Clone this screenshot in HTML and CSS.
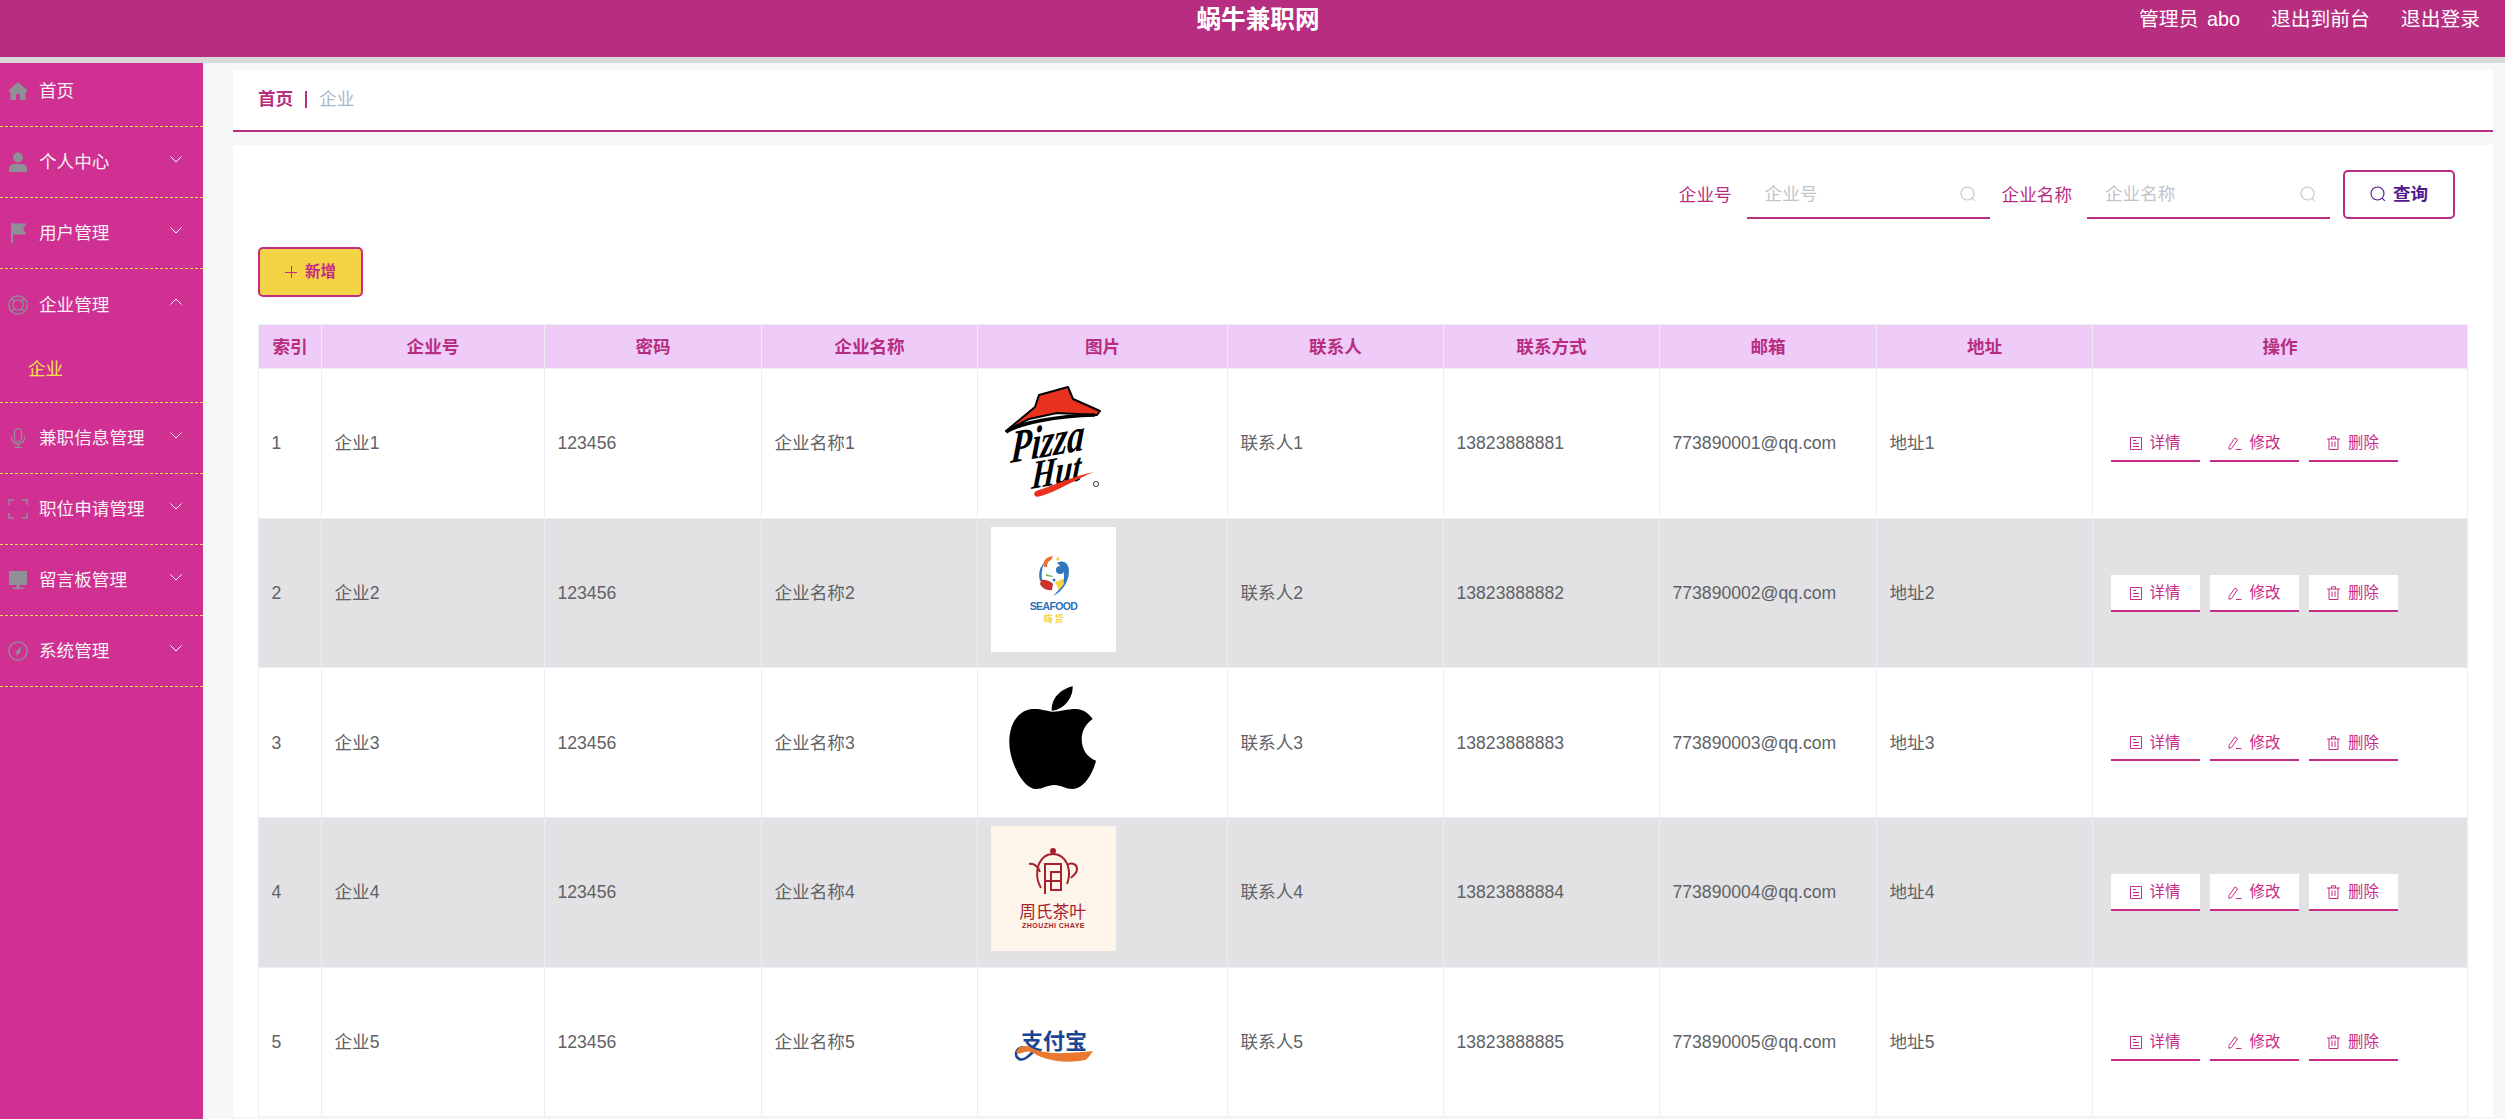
FILE: index.html
```html
<!DOCTYPE html>
<html lang="zh">
<head>
  <meta charset="UTF-8" />
  <title>蜗牛兼职网</title>
  <link rel="stylesheet" href="styles.css">
</head>
<body>
  <svg class="defs" aria-hidden="true">
    <symbol id="i-down" viewBox="0 0 12 7"><path d="M.5.5 6 6 11.5.5" fill="none" stroke="currentColor"/></symbol>
    <symbol id="i-up" viewBox="0 0 12 7"><path d="M.5 6.500 6 1l5.500 5.500" fill="none" stroke="currentColor"/></symbol>
    <symbol id="i-search" viewBox="0 0 16 16"><circle cx="7.500" cy="7.500" r="6.500" fill="none" stroke="currentColor" stroke-width="1.100"/><path d="m12.200 12.200 2.600 2.600" stroke="currentColor" stroke-width="1.100"/></symbol>
    <symbol id="i-detail" viewBox="0 0 12 13"><path d="M.5.5h11v12H.5z" fill="none" stroke="currentColor"/><path d="M3 3.500h3M3 6.500h6M3 9.500h6" stroke="currentColor"/></symbol>
    <symbol id="i-edit" viewBox="0 0 14 13"><path d="M1 9.500 7 1l2.500 1.800-6 8.700-2.500.8z" fill="none" stroke="currentColor"/><path d="M8 12.500h5.500" stroke="currentColor"/></symbol>
    <symbol id="i-del" viewBox="0 0 13 14"><path d="M0 3h13M4.500 3V.8h4V3M2 3v10.500h9V3M5 5.500v5.500M8 5.500v5.500" fill="none" stroke="currentColor"/></symbol>
  </svg>

  <header class="topbar">
    <div class="site-title">蜗牛兼职网</div>
    <nav class="top-links">
      <a>管理员 abo</a>
      <a>退出到前台</a>
      <a>退出登录</a>
    </nav>
  </header>

  <div class="layout">
    <aside class="sidebar">
      <div class="menu-item first">
        <svg class="menu-icon" viewBox="0 0 20 20"><path d="M10 1 1 9v2h1.500v8H8v-6h4v6h5.500v-8H19V9z" fill="currentColor"/></svg>
        <span>首页</span>
      </div>
      <div class="menu-item">
        <svg class="menu-icon" viewBox="0 0 20 20"><circle cx="10" cy="5.500" r="5" fill="currentColor"/><path d="M1 20v-3.500C1 13.500 3.500 12 6 12h8c2.500 0 5 1.500 5 4.500V20z" fill="currentColor"/></svg>
        <span>个人中心</span>
        <svg class="chevron"><use href="#i-down"/></svg>
      </div>
      <div class="menu-item">
        <svg class="menu-icon" viewBox="0 0 20 20"><path d="M3 0h2v20H3zM5 .5h13.500L15 6l3.500 5.500H5z" fill="currentColor"/></svg>
        <span>用户管理</span>
        <svg class="chevron"><use href="#i-down"/></svg>
      </div>
      <div class="menu-item open">
        <svg class="menu-icon" viewBox="0 0 20 20"><g fill="none" stroke="currentColor" stroke-width="1.300"><circle cx="10" cy="10" r="9.200"/><circle cx="10" cy="10" r="5.200"/><path d="m3.500 3.500 3 3M16.500 3.500l-3 3M3.500 16.500l3-3M16.500 16.500l-3-3"/></g></svg>
        <span>企业管理</span>
        <svg class="chevron"><use href="#i-up"/></svg>
      </div>
      <div class="submenu">企业</div>
      <div class="menu-item">
        <svg class="menu-icon" viewBox="0 0 20 20"><g fill="none" stroke="currentColor" stroke-width="1.300"><rect x="6.500" y=".7" width="7" height="13" rx="3.500"/><path d="M3.500 8.500v1.500c0 3.500 3 6 6.500 6s6.500-2.500 6.500-6V8.500M10 16v3.500M6.500 19.500h7"/></g></svg>
        <span>兼职信息管理</span>
        <svg class="chevron"><use href="#i-down"/></svg>
      </div>
      <div class="menu-item">
        <svg class="menu-icon" viewBox="0 0 20 20"><path d="M6 1H1v5M14 1h5v5M6 19H1v-5M14 19h5v-5" fill="none" stroke="currentColor" stroke-width="1.500"/></svg>
        <span>职位申请管理</span>
        <svg class="chevron"><use href="#i-down"/></svg>
      </div>
      <div class="menu-item">
        <svg class="menu-icon" viewBox="0 0 20 20"><path d="M1 1h18v14H1zM8.500 15h3v2.500h4V19h-11v-1.500h4z" fill="currentColor"/></svg>
        <span>留言板管理</span>
        <svg class="chevron"><use href="#i-down"/></svg>
      </div>
      <div class="menu-item">
        <svg class="menu-icon" viewBox="0 0 20 20"><circle cx="10" cy="10" r="9.200" fill="none" stroke="currentColor" stroke-width="1.300"/><path d="M13.500 5 12 12l-3.500 2.500L8 10.500z" fill="currentColor"/></svg>
        <span>系统管理</span>
        <svg class="chevron"><use href="#i-down"/></svg>
      </div>
    </aside>

    <main class="content">
      <div class="breadcrumb">
        <b>首页</b><i class="sep"></i><span>企业</span>
      </div>

      <section class="card">
        <form class="search-row">
          <label class="search-label">企业号</label>
          <div class="search-input">
            <input type="text" placeholder="企业号" />
            <svg><use href="#i-search"/></svg>
          </div>
          <label class="search-label second">企业名称</label>
          <div class="search-input">
            <input type="text" placeholder="企业名称" />
            <svg><use href="#i-search"/></svg>
          </div>
          <button type="button" class="query-btn"><svg><use href="#i-search"/></svg>查询</button>
        </form>

        <button type="button" class="add-btn"><span class="plus"></span>新增</button>

        <table class="data-table">
          <colgroup>
            <col class="c-index"><col class="c-no"><col class="c-pass"><col class="c-name"><col class="c-pic">
            <col class="c-contact"><col class="c-phone"><col class="c-mail"><col class="c-addr"><col>
          </colgroup>
          <thead>
            <tr>
              <th>索引</th><th>企业号</th><th>密码</th><th>企业名称</th><th>图片</th>
              <th>联系人</th><th>联系方式</th><th>邮箱</th><th>地址</th><th>操作</th>
            </tr>
          </thead>
          <tbody>
            <tr>
              <td>1</td><td>企业1</td><td>123456</td><td>企业名称1</td>
              <td>
                <svg class="logo" viewBox="0 0 125 125">
                  <path d="M15 54 44 30l4-12 29-8 5 12 27 12-3 4-40-2-28 6z" fill="#e8321f" stroke="#000" stroke-width="2" stroke-linejoin="round"/>
                  <path d="M15 55c14-9 50-16 89-17" fill="none" stroke="#000" stroke-width="3.500"/>
                  <text transform="translate(19 86) rotate(-10) skewX(-14) scale(.86 1.15)" class="pizza">Pizza</text>
                  <text transform="translate(40 112) rotate(-10) skewX(-14) scale(.86 1.1)" class="pizza hut">Hut</text>
                  <path d="M44 119c-2-3 0-5 4-6 18-6 38-15 55-18-16 6-38 20-53 24-3 1-5 1-6 0z" fill="#e8321f"/>
                  <circle cx="105" cy="107" r="2.500" fill="none" stroke="#333"/>
                </svg>
              </td>
              <td>联系人1</td><td>13823888881</td><td>773890001@qq.com</td><td>地址1</td>
              <td>
                <div class="ops">
                  <a class="op-btn"><svg class="op-detail"><use href="#i-detail"/></svg>详情</a>
                  <a class="op-btn"><svg class="op-edit"><use href="#i-edit"/></svg>修改</a>
                  <a class="op-btn"><svg class="op-del"><use href="#i-del"/></svg>删除</a>
                </div>
              </td>
            </tr>
            <tr>
              <td>2</td><td>企业2</td><td>123456</td><td>企业名称2</td>
              <td>
                <svg class="logo logo-white" viewBox="0 0 125 125">
                  <path d="M53 40c-2-6 2-10 9-11l-2 4c-3 1-4 4-4 7z" fill="#e8703a"/>
                  <circle cx="67" cy="32" r="1.800" fill="#f5d43f"/>
                  <path d="M66 36c6-4 12 0 12 8 0 10-6 20-16 25 6-6 11-12 11-20 0-6-3-10-7-13z" fill="#2f76bd"/>
                  <circle cx="69" cy="43" r="4" fill="#2f76bd"/>
                  <path d="M53 36c-4 4-6 10-4 18l2-1c-1-6 0-12 2-17z" fill="#2f76bd"/>
                  <path d="M50 53c3-1 10 1 12 4l-1 6c-5 1-10-2-12-6z" fill="#c9342f"/>
                  <path d="M64 55l8-3 1 5-5 6z" fill="#f5d43f"/>
                  <path d="M55 47l7 2v1l-7-1z" fill="#7cb65a"/>
                  <circle cx="63" cy="53" r="1.500" fill="#2f76bd"/>
                  <text x="62.500" y="83" class="seafood">SEAFOOD</text>
                  <text x="62.500" y="95" class="seafood-cn">嗨 货</text>
                </svg>
              </td>
              <td>联系人2</td><td>13823888882</td><td>773890002@qq.com</td><td>地址2</td>
              <td>
                <div class="ops">
                  <a class="op-btn"><svg class="op-detail"><use href="#i-detail"/></svg>详情</a>
                  <a class="op-btn"><svg class="op-edit"><use href="#i-edit"/></svg>修改</a>
                  <a class="op-btn"><svg class="op-del"><use href="#i-del"/></svg>删除</a>
                </div>
              </td>
            </tr>
            <tr>
              <td>3</td><td>企业3</td><td>123456</td><td>企业名称3</td>
              <td>
                <svg class="logo" viewBox="0 0 125 125">
                  <path d="M81.700 9.300C70 12 60 21 60.700 33.700 72 33 82 22 81.700 9.300z"/>
                  <path d="M61.500 34.700C55 34 50 31.500 41.700 32 27 33 18.300 47 18.300 65.300c0 20 14 46.700 26.700 46.700 7 0 11-4 18.300-4 7 0 11 4 18.400 4 11 0 20-15 23.300-28.300C96 80 90.700 72.500 90.700 62c0-8.500 4.500-15.500 11-20-4.500-6.500-10.500-10-16.700-10-9 0-15 2.700-23.500 2.700z"/>
                </svg>
              </td>
              <td>联系人3</td><td>13823888883</td><td>773890003@qq.com</td><td>地址3</td>
              <td>
                <div class="ops">
                  <a class="op-btn"><svg class="op-detail"><use href="#i-detail"/></svg>详情</a>
                  <a class="op-btn"><svg class="op-edit"><use href="#i-edit"/></svg>修改</a>
                  <a class="op-btn"><svg class="op-del"><use href="#i-del"/></svg>删除</a>
                </div>
              </td>
            </tr>
            <tr>
              <td>4</td><td>企业4</td><td>123456</td><td>企业名称4</td>
              <td>
                <svg class="logo logo-cream" viewBox="0 0 125 125">
                  <g fill="none" stroke="#a5222d" stroke-width="2">
                    <path d="M50 62c-6-10-5-24 3-31 5-4 13-4 18 0 7 6 9 17 5 27"/>
                    <path d="M38 38c6-1 9 3 11 8"/>
                    <path d="M76 39c5-3 10-1 10 4s-4 6-6 9"/>
                    <path d="M54 68V38h16v26H60V46h10M54 55h16"/>
                  </g>
                  <circle cx="62" cy="25" r="3" fill="#a5222d"/>
                  <text x="61.500" y="92" class="tea-cn">周氏茶叶</text>
                  <text x="62.500" y="102" class="tea-en">ZHOUZHI CHAYE</text>
                </svg>
              </td>
              <td>联系人4</td><td>13823888884</td><td>773890004@qq.com</td><td>地址4</td>
              <td>
                <div class="ops">
                  <a class="op-btn"><svg class="op-detail"><use href="#i-detail"/></svg>详情</a>
                  <a class="op-btn"><svg class="op-edit"><use href="#i-edit"/></svg>修改</a>
                  <a class="op-btn"><svg class="op-del"><use href="#i-del"/></svg>删除</a>
                </div>
              </td>
            </tr>
            <tr>
              <td>5</td><td>企业5</td><td>123456</td><td>企业名称5</td>
              <td>
                <svg class="logo" viewBox="0 0 125 125">
                  <text x="63" y="73" class="alipay">支付宝</text>
                  <path d="M36 72c-6-2-11 1-11 6s5 7 10 4c3-2 6-5 9-8" fill="none" stroke="#1c4594" stroke-width="2.500"/>
                  <path d="M25 76c3-7 10-7 16-4 10 5 24 7 61 3-3 4-4 7-8 9-15 3-30 2-44-3-7-3-10-7-16-5-4 1-6 3-9 0z" fill="#e8792e"/>
                </svg>
              </td>
              <td>联系人5</td><td>13823888885</td><td>773890005@qq.com</td><td>地址5</td>
              <td>
                <div class="ops">
                  <a class="op-btn"><svg class="op-detail"><use href="#i-detail"/></svg>详情</a>
                  <a class="op-btn"><svg class="op-edit"><use href="#i-edit"/></svg>修改</a>
                  <a class="op-btn"><svg class="op-del"><use href="#i-del"/></svg>删除</a>
                </div>
              </td>
            </tr>
          </tbody>
        </table>
      </section>
    </main>
  </div>
</body>
</html>
```

FILE: styles.css
```css
html,
body {
  height: 100vh;
  margin: 0;
  overflow: hidden;
}
body {
  background-color: #f6f7f9;
  font-family: "Liberation Sans", "Noto Sans CJK SC", sans-serif;
  font-size: 17.6px;
  line-height: 24px;
  color: #606266;
}
.defs {
  display: none;
}

/* top bar */
.topbar {
  height: 57px;
  box-sizing: content-box;
  border-bottom: 6px solid #d9d9d9;
  background-color: #b72e81;
  color: white;
  display: flex;
  justify-content: flex-end;
  position: relative;
}
.site-title {
  position: absolute;
  left: 0;
  right: 0;
  top: 4px;
  text-align: center;
  font-size: 24.6px;
  font-weight: bold;
  line-height: 32px;
  padding-left: 11px;
}
.top-links {
  display: flex;
  gap: 31px;
  padding: 5px 25px 0 0;
  font-size: 19.8px;
  line-height: 29px;
  word-spacing: 3px;
}

/* side menu */
.layout {
  display: flex;
  height: calc(100vh - 63px);
}
.sidebar {
  width: 203px;
  flex: none;
  background-color: #d03092;
  color: white;
}
.menu-item {
  height: 71px;
  box-sizing: border-box;
  border-bottom: 1px dashed #f5e04c;
  display: flex;
  align-items: center;
  padding: 0 21px 0 8px;
  color: #f7f2f6;
}
.menu-item.first {
  height: 64px;
  padding-bottom: 7px;
}
.menu-item.open {
  border-bottom: none;
}
.menu-icon {
  width: 20px;
  height: 20px;
  margin-right: 11px;
  color: #8f8f96;
  flex: none;
}
.chevron {
  width: 12px;
  height: 7px;
  margin-left: auto;
  margin-bottom: 6px;
  color: white;
}
.submenu {
  height: 63px;
  box-sizing: border-box;
  border-bottom: 1px dashed #f5e04c;
  padding: 17px 0 0 28px;
  color: #f5e04c;
}

/* main area */
.content {
  flex: 1;
  min-width: 0;
  padding: 7px 12px 0 30px;
}
.breadcrumb {
  height: 62px;
  box-sizing: border-box;
  border-bottom: 2px solid #b72e81;
  background-color: white;
  padding: 0 0 2px 25px;
  display: flex;
  align-items: center;
  color: #a9b5cd;
}
.breadcrumb b {
  color: #b72e81;
}
.sep {
  width: 2px;
  height: 17px;
  background-color: #b72e81;
  margin: 0 12px 0 12px;
}
.card {
  margin-top: 13px;
  background-color: white;
  padding: 25px 25px 0;
}

/* search */
.search-row {
  display: flex;
  justify-content: flex-end;
  align-items: center;
  margin-right: 13px;
}
.search-label {
  color: #b72e81;
  margin-right: 15px;
}
.search-label.second {
  margin-left: 12px;
  margin-right: 15px;
}
.search-input {
  width: 243px;
  height: 49px;
  box-sizing: border-box;
  border-bottom: 2px solid #b72e81;
  display: flex;
  align-items: center;
  padding: 0 14px 0 18px;
}
.search-input input {
  flex: 1;
  min-width: 0;
  border: none;
  outline: none;
  padding: 0;
  font: inherit;
  line-height: 24px;
  color: #606266;
  background: none;
}
.search-input input::placeholder {
  color: #c0c4cc;
}
.search-input svg {
  width: 16px;
  height: 16px;
  color: #c0c4cc;
  flex: none;
}
.query-btn {
  width: 112px;
  height: 49px;
  margin-left: 13px;
  box-sizing: border-box;
  border: 2px solid #b72e81;
  border-radius: 5px;
  background-color: white;
  padding: 0 0 2px;
  color: #4f1b8f;
  font: inherit;
  font-weight: bold;
  display: flex;
  align-items: center;
  justify-content: center;
  gap: 7px;
}
.query-btn svg {
  width: 16px;
  height: 16px;
}
.add-btn {
  display: flex;
  align-items: center;
  justify-content: center;
  gap: 8px;
  width: 105px;
  height: 50px;
  margin-top: 28px;
  box-sizing: border-box;
  border: 2px solid #c62b85;
  border-radius: 5px;
  background-color: #f4d444;
  color: #c62b85;
  font: inherit;
  font-size: 15.400px;
  font-weight: bold;
}
.plus {
  width: 12px;
  height: 12px;
  background:
    linear-gradient(#c62b85, #c62b85) center / 100% 1px no-repeat,
    linear-gradient(#c62b85, #c62b85) center / 1px 100% no-repeat;
}

/* table */
.data-table {
  width: 2210px;
  margin-top: 27px;
  border-collapse: collapse;
  table-layout: fixed;
}
.c-index { width: 63px; }
.c-no { width: 223px; }
.c-pass { width: 217px; }
.c-name { width: 216px; }
.c-pic { width: 250px; }
.c-contact { width: 216px; }
.c-phone { width: 216px; }
.c-mail { width: 217px; }
.c-addr { width: 216px; }
.data-table th,
.data-table td {
  border: 1px solid #ebeef5;
  padding: 0 12.500px;
  overflow: hidden;
  white-space: nowrap;
}
.data-table th {
  height: 44px;
  box-sizing: border-box;
  background-color: #eeccf7;
  color: #b72e81;
  font-weight: bold;
  text-align: center;
}
.data-table td {
  height: 149.700px;
  box-sizing: border-box;
}
.data-table tbody tr:nth-child(even) td {
  background-color: #e2e1e3;
}
.logo {
  display: block;
  width: 125px;
  height: 125px;
  margin-bottom: 7px;
}
.logo-white {
  background-color: white;
}
.logo-cream {
  background-color: #fdf5ea;
}
.pizza {
  font-family: "Liberation Serif", serif;
  font-style: italic;
  font-weight: bold;
  font-size: 40px;
  fill: black;
}
.pizza.hut {
  font-size: 36px;
}
.seafood {
  font-family: "Liberation Sans", sans-serif;
  font-weight: bold;
  font-size: 10.500px;
  letter-spacing: -.6px;
  text-anchor: middle;
  fill: #2f6fb8;
}
.seafood-cn {
  font-family: "Noto Sans CJK SC", sans-serif;
  font-weight: bold;
  font-size: 9px;
  text-anchor: middle;
  fill: #f5d43f;
}
.tea-cn {
  font-family: "Noto Sans CJK SC", sans-serif;
  font-size: 16.700px;
  text-anchor: middle;
  fill: #a5222d;
}
.tea-en {
  font-family: "Liberation Sans", sans-serif;
  font-size: 7px;
  font-weight: bold;
  letter-spacing: .45px;
  text-anchor: middle;
  fill: #a5222d;
}
.alipay {
  font-family: "Noto Sans CJK SC", sans-serif;
  font-weight: bold;
  font-size: 22px;
  text-anchor: middle;
  fill: #1c4594;
}

/* row buttons */
.ops {
  display: flex;
  gap: 10px;
  margin-left: 5px;
}
.op-btn {
  width: 89px;
  height: 37px;
  box-sizing: border-box;
  border-bottom: 2px solid #c62b85;
  background-color: white;
  padding-top: 2px;
  color: #c62b85;
  font-size: 15.400px;
  display: flex;
  align-items: center;
  justify-content: center;
  gap: 8px;
}
.op-btn svg {
  flex: none;
}
.op-detail {
  width: 12px;
  height: 13px;
}
.op-edit {
  width: 14px;
  height: 13px;
}
.op-del {
  width: 13px;
  height: 14px;
}
```
